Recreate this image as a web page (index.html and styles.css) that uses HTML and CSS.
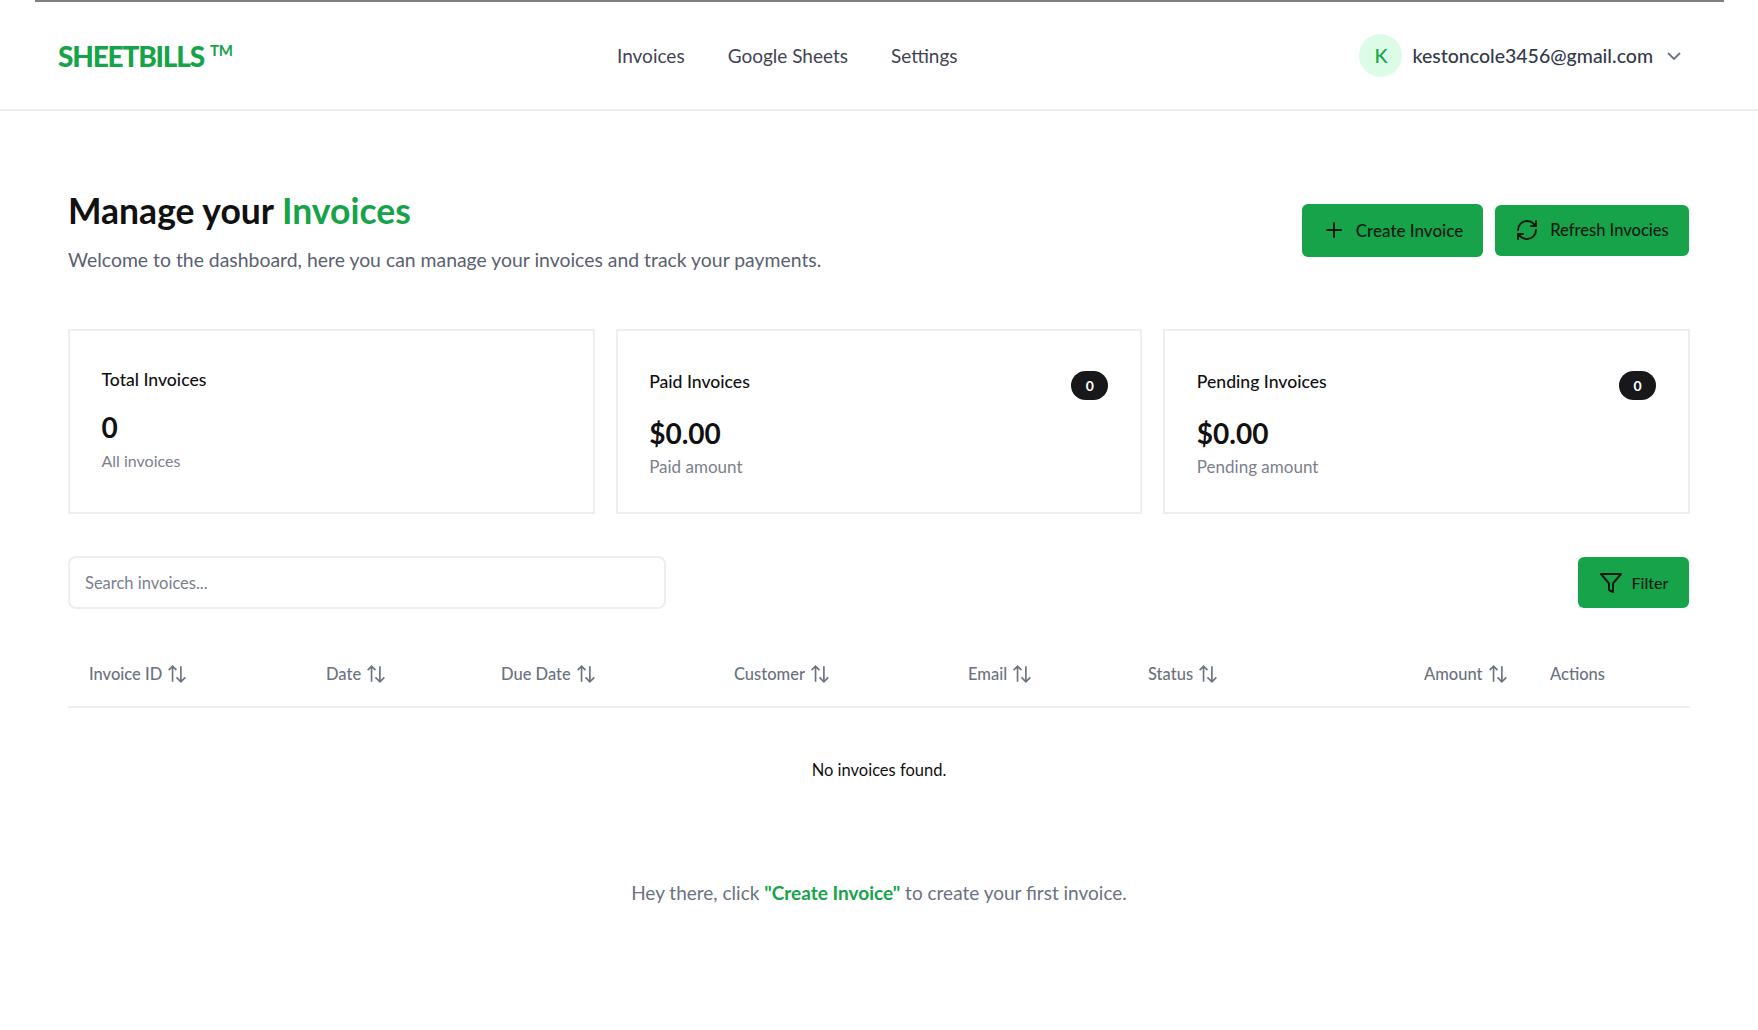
FILE: index.html
```html
<!DOCTYPE html>
<html>
	<head>
		<meta charset="UTF-8">
		<title>Sheetbills</title>
		<link rel="stylesheet" href="styles.css">
	</head>
	<body>
		<div class="top-line"></div>
		<header class="header">
			<div class="logo">SHEETBILLS<sup class="logo-tm">TM</sup></div>
			<nav class="nav">
				<a href="#">Invoices</a>
				<a href="#">Google Sheets</a>
				<a href="#">Settings</a>
			</nav>
			<div class="user">
				<span class="avatar">K</span>
				<span class="user-email">kestoncole3456@gmail.com</span>
				<svg class="chevron" viewBox="0 0 24 24"><path d="M6 9l6 6 6-6"/></svg>
			</div>
		</header>

		<main class="main">
			<section class="title-row">
				<div>
					<h1 class="title">Manage your <span class="green">Invoices</span></h1>
					<p class="subtitle">Welcome to the dashboard, here you can manage your invoices and track your payments.</p>
				</div>
				<div class="title-btns">
					<a href="#" class="btn btn-create">
						<svg class="icon" viewBox="0 0 24 24"><path d="M5 12h14M12 5v14"/></svg>
						Create Invoice
					</a>
					<a href="#" class="btn btn-refresh">
						<svg class="icon" viewBox="0 0 24 24"><path d="M3 12a9 9 0 0 1 9-9 9.75 9.75 0 0 1 6.74 2.74L21 8"/><path d="M21 3v5h-5"/><path d="M21 12a9 9 0 0 1-9 9 9.75 9.75 0 0 1-6.74-2.74L3 16"/><path d="M8 16H3v5"/></svg>
						Refresh Invocies
					</a>
				</div>
			</section>

			<section class="cards">
				<div class="card card-total">
					<div class="card-name">Total Invoices</div>
					<div class="card-value">0</div>
					<div class="card-note">All invoices</div>
				</div>
				<div class="card">
					<div class="card-top">
						<div class="card-name">Paid Invoices</div>
						<span class="badge">0</span>
					</div>
					<div class="card-value">$0.00</div>
					<div class="card-note">Paid amount</div>
				</div>
				<div class="card">
					<div class="card-top">
						<div class="card-name">Pending Invoices</div>
						<span class="badge">0</span>
					</div>
					<div class="card-value">$0.00</div>
					<div class="card-note">Pending amount</div>
				</div>
			</section>

			<section class="tools">
				<input class="search" type="text" placeholder="Search invoices...">
				<a href="#" class="btn btn-filter">
					<svg class="icon" viewBox="0 0 24 24"><path d="M22 3H2l8 9.46V19l4 2v-8.54L22 3z"/></svg>
					Filter
				</a>
			</section>

			<div class="table-head">
				<div class="th">Invoice ID <svg class="sort" viewBox="0 0 18 18"><path d="M5 16V2M1.5 5.5L5 2l3.5 3.5M12.5 2v14M8.5 12l4 4 4-4"/></svg></div>
				<div class="th">Date <svg class="sort" viewBox="0 0 18 18"><path d="M5 16V2M1.5 5.5L5 2l3.5 3.5M12.5 2v14M8.5 12l4 4 4-4"/></svg></div>
				<div class="th">Due Date <svg class="sort" viewBox="0 0 18 18"><path d="M5 16V2M1.5 5.5L5 2l3.5 3.5M12.5 2v14M8.5 12l4 4 4-4"/></svg></div>
				<div class="th">Customer <svg class="sort" viewBox="0 0 18 18"><path d="M5 16V2M1.5 5.5L5 2l3.5 3.5M12.5 2v14M8.5 12l4 4 4-4"/></svg></div>
				<div class="th">Email <svg class="sort" viewBox="0 0 18 18"><path d="M5 16V2M1.5 5.5L5 2l3.5 3.5M12.5 2v14M8.5 12l4 4 4-4"/></svg></div>
				<div class="th">Status <svg class="sort" viewBox="0 0 18 18"><path d="M5 16V2M1.5 5.5L5 2l3.5 3.5M12.5 2v14M8.5 12l4 4 4-4"/></svg></div>
				<div class="th">Amount <svg class="sort" viewBox="0 0 18 18"><path d="M5 16V2M1.5 5.5L5 2l3.5 3.5M12.5 2v14M8.5 12l4 4 4-4"/></svg></div>
				<div class="th">Actions</div>
			</div>
			<div class="empty">No invoices found.</div>
			<p class="hint">Hey there, click <strong class="green">"Create Invoice"</strong> to create your first invoice.</p>
		</main>
	</body>
</html>
```

FILE: styles.css
```css
* {
	margin: 0;
	padding: 0;
	box-sizing: border-box;
}

body {
	background: #fff;
	color: #111;
	font-family: "Lato", "Liberation Sans", sans-serif;
}

a {
	text-decoration: none;
	color: inherit;
}

.green {
	color: #16a34a;
}

.top-line {
	height: 2px;
	margin: 0 34px 0 35px;
	background: #808080;
}

.header {
	height: 109px;
	padding: 0 72px 0 58px;
	display: flex;
	align-items: center;
	border-bottom: 2px solid #eeeeee;
}

.logo {
	width: 559px;
	color: #16a34a;
	font-size: 28px;
	font-weight: 900;
	letter-spacing: -1.2px;
}

.logo-tm {
	margin-left: 6px;
	font-size: 15px;
	font-weight: 700;
	letter-spacing: 0;
	vertical-align: 11px;
	line-height: 0;
}

.nav {
	display: flex;
	gap: 43px;
	font-size: 19px;
	color: #3f4452;
}

.user {
	margin-left: auto;
	display: flex;
	align-items: center;
	color: #333a4a;
	font-size: 19.5px;
	font-weight: 500;
}

.avatar {
	width: 43px;
	height: 43px;
	border-radius: 50%;
	background: #dcfce7;
	color: #16a34a;
	display: flex;
	align-items: center;
	justify-content: center;
	margin-right: 10px;
}

.chevron {
	width: 24px;
	height: 24px;
	margin-left: 9px;
	fill: none;
	stroke: #6b7280;
	stroke-width: 1.8;
}

.main {
	padding: 0 68px;
}

.title-row {
	display: flex;
	justify-content: space-between;
	align-items: center;
	padding-top: 78px;
}

.title {
	font-size: 35.5px;
	font-weight: 700;
	line-height: 44px;
}

.subtitle {
	margin-top: 14px;
	font-size: 19.4px;
	line-height: 26px;
	color: #5b6170;
}

.title-btns {
	display: flex;
	align-items: center;
	gap: 12px;
	margin-right: 1px;
	margin-bottom: 2px;
}

.btn {
	display: flex;
	align-items: center;
	justify-content: center;
	background: #16a34a;
	color: #0d1a12;
	font-size: 16px;
	font-weight: 500;
	border-radius: 6px;
}

.icon {
	width: 24px;
	height: 24px;
	fill: none;
	stroke: #0d1a12;
	stroke-width: 2;
	stroke-linecap: round;
	stroke-linejoin: round;
}

.btn-create {
	width: 181px;
	height: 53px;
	gap: 10px;
	font-size: 17px;
}

.btn-refresh {
	width: 194px;
	height: 51px;
	gap: 11px;
	font-size: 16.5px;
}

.btn-filter {
	width: 111px;
	height: 51px;
	gap: 9px;
	margin-right: 1px;
}

.cards {
	margin-top: 56px;
	display: grid;
	grid-template-columns: repeat(3, 1fr);
	gap: 21px;
}

.card {
	height: 185px;
	border: 2px solid #eeeeee;
	padding: 39px 32px 0 31.5px;
}

.card-total {
	padding-top: 37px;
}

.card-top {
	display: flex;
	justify-content: space-between;
	align-items: flex-start;
}

.card-name {
	font-size: 17.6px;
	font-weight: 500;
	line-height: 24px;
}

.badge {
	width: 37px;
	height: 29px;
	margin-top: 1px;
	border-radius: 15px;
	background: #18181b;
	color: #fff;
	font-size: 14px;
	font-weight: 700;
	display: flex;
	align-items: center;
	justify-content: center;
}

.card-value {
	margin-top: 15px;
	font-size: 28px;
	font-weight: 700;
	line-height: 36px;
}

.card-total .card-value {
	margin-top: 17px;
}

.card-note {
	margin-top: 5px;
	font-size: 17px;
	line-height: 22px;
	color: #7a808c;
}

.card-total .card-note {
	font-size: 16px;
}

.tools {
	margin-top: 42px;
	display: flex;
	justify-content: space-between;
	align-items: center;
}

.search {
	width: 598px;
	height: 53px;
	padding: 0 15px;
	border: 2px solid #eeeeee;
	border-radius: 8px;
	font-family: inherit;
	font-size: 16.5px;
	outline: none;
}

.search::placeholder {
	color: #7a808c;
}

.table-head {
	margin-top: 32px;
	height: 67px;
	display: grid;
	grid-template-columns: 237px 175px 233px 234px 180px 276px 126px 160px;
	align-items: center;
	border-bottom: 2px solid #eeeeee;
}

.th {
	padding-left: 21px;
	display: flex;
	align-items: center;
	gap: 5px;
	font-size: 16.5px;
	font-weight: 500;
	color: #6b7280;
}

.sort {
	width: 20px;
	height: 20px;
	fill: none;
	stroke: #6b7280;
	stroke-width: 1.5;
}

.empty {
	margin-top: 49px;
	text-align: center;
	font-size: 16.5px;
	line-height: 26px;
}

.hint {
	margin-top: 97px;
	text-align: center;
	font-size: 19px;
	line-height: 26px;
	color: #6b7280;
}

.hint strong {
	font-weight: 700;
}
```
